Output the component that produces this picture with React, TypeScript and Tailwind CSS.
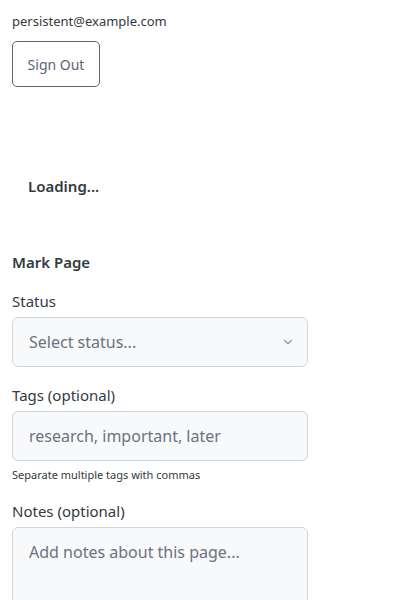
import { ChevronDown } from "lucide-react";

export default function App() {
  return (
    <div className="min-h-screen bg-white px-3 pt-3 font-['Noto_Sans','Open_Sans',sans-serif] text-[#343a40]">
      <div className="text-[13px] leading-[18px]">persistent@example.com</div>
      <button className="mt-[11px] h-[46px] w-[88px] rounded-[5px] border border-[#5b6478] text-[14px] text-[#5b6478]">
        Sign Out
      </button>

      <div className="mt-[89px] pl-4 text-[15px] font-semibold leading-5">Loading...</div>

      <div className="mt-[56px] text-[15px] font-semibold leading-5">Mark Page</div>

      <div className="mt-[19px] text-[15px] leading-5">Status</div>
      <div className="mt-[6px] flex h-[50px] w-[296px] items-center justify-between rounded-[6px] border border-[#d0d5e0] bg-[#f8f9fa] pl-4 pr-3 text-[16px] text-[#6b7280]">
        <span>Select status...</span>
        <ChevronDown size={14} className="text-[#8a909c]" />
      </div>

      <div className="mt-[18px] text-[15px] leading-5">Tags (optional)</div>
      <input
        className="mt-[6px] block h-[50px] w-[296px] rounded-[6px] border border-[#d0d5e0] bg-[#f8f9fa] px-4 text-[16px] text-[#6b7280] placeholder:text-[#6b7280] outline-none"
        placeholder="research, important, later"
      />
      <div className="mt-[7px] text-[11px] leading-[14px] text-[#343a40]">Separate multiple tags with commas</div>

      <div className="mt-[19px] text-[15px] leading-5">Notes (optional)</div>
      <textarea
        className="mt-[6px] block h-[100px] w-[296px] resize-none rounded-[6px] border border-[#d0d5e0] bg-[#f8f9fa] px-4 py-[12px] text-[16px] text-[#6b7280] placeholder:text-[#6b7280] outline-none"
        placeholder="Add notes about this page..."
      />
    </div>
  );
}
